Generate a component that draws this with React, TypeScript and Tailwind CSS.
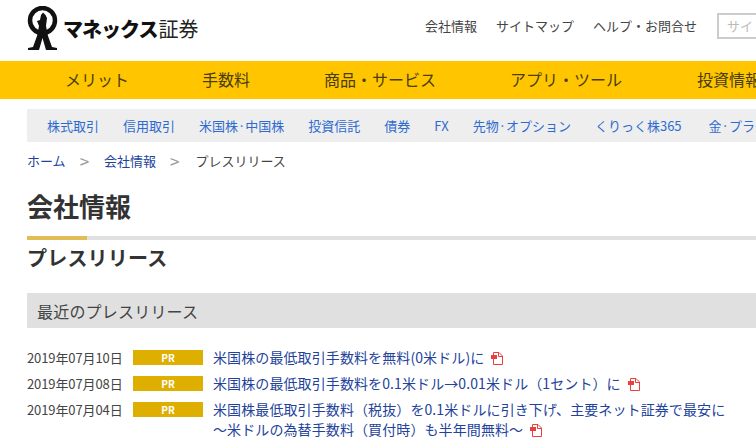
import React from 'react';

const jp = { fontFamily: '"Noto Sans CJK JP", "Noto Sans", sans-serif' };

const mainNav = [
  { label: 'メリット', cls: 'w-[137px]' },
  { label: '手数料', cls: 'w-[122px]' },
  { label: '商品・サービス', cls: 'w-[186px]' },
  { label: 'アプリ・ツール', cls: 'w-[187px]' },
  { label: '投資情報', cls: 'w-[120px]' },
];

const subNav = ['株式取引', '信用取引', '米国株·中国株', '投資信託', '債券', 'FX', '先物·オプション', 'くりっく株365', '金·プラチナ'];

const releases = [
  { date: '2019年07月10日', lines: ['米国株の最低取引手数料を無料(0米ドル)に'] },
  { date: '2019年07月08日', lines: ['米国株の最低取引手数料を0.1米ドル→0.01米ドル（1セント）に'] },
  {
    date: '2019年07月04日',
    lines: ['米国株最低取引手数料（税抜）を0.1米ドルに引き下げ、主要ネット証券で最安に', '～米ドルの為替手数料（買付時）も半年間無料～'],
  },
];

function Logo() {
  return (
    <svg width="31" height="44" viewBox="0 0 31 44" className="shrink-0">
      <circle cx="15.5" cy="14.5" r="12.5" fill="none" stroke="#111" strokeWidth="4.5" />
      <path d="M14 9 L16 6.5 L18.5 9 L20 12 L19 20 L21 30 L25 41 L30 42 L30 44 L19 44 L15.5 32 L12 44 L1 44 L1 42 L6 41 L10 30 L12 20 L10 15 L13 14 Z" fill="#111" />
    </svg>
  );
}

function PdfIcon() {
  return (
    <svg width="12" height="13" viewBox="0 0 12 13" className="inline-block ml-[7px] align-[-2px]">
      <path d="M2.5 0.5 H8 L11.5 4 V12.5 H2.5 Z" fill="#fff" stroke="#e8403f" />
      <path d="M7.5 0.5 V4.5 H11.5" fill="none" stroke="#e8403f" />
      <rect x="0" y="3" width="6" height="4" fill="#e8403f" />
    </svg>
  );
}

export default function App() {
  return (
    <div className="w-[756px] h-[441px] overflow-hidden bg-white text-[#333]" style={jp}>
      {/* Header */}
      <div className="h-[61px] flex items-start pl-[27px] whitespace-nowrap">
        <div className="flex items-start pt-[6px] w-[398px] shrink-0">
          <Logo />
          <span className="ml-[5px] mt-[10px] text-[20px] leading-[26px] font-black tracking-[-1px] text-[#111]">マネックス</span>
          <span className="ml-[1px] mt-[10px] text-[20px] leading-[26px] text-[#222]">証券</span>
        </div>
        <div className="flex items-center h-[26px] mt-[13px] text-[13px] text-[#444] shrink-0">
          <span className="w-[71px]">会社情報</span>
          <span className="w-[97px]">サイトマップ</span>
          <span className="w-[124px]">ヘルプ・お問合せ</span>
          <div className="w-[60px] h-[26px] border-[2px] border-[#ccc] pl-[8px] text-[13px] leading-[22px] text-[#bbb] shrink-0">サイト内検索</div>
        </div>
      </div>

      {/* Main nav */}
      <div className="h-[38px] bg-[#ffc600] flex items-center pb-[3px] pl-[65px] whitespace-nowrap text-[16px] leading-[32px] text-[#4a3d10]">
        {mainNav.map(item => (
          <span key={item.label} className={`${item.cls} shrink-0`}>{item.label}</span>
        ))}
      </div>

      {/* Sub nav */}
      <div className="ml-[27px] mt-[10px] h-[33px] bg-[#eeeeee] flex items-center gap-[24px] pl-[20px] whitespace-nowrap text-[13px] text-[#2e6bd0]">
        {subNav.map(item => (
          <span key={item} className="shrink-0 last:ml-[3px]">{item}</span>
        ))}
      </div>

      {/* Breadcrumb */}
      <div className="ml-[27px] mt-[9px] h-[20px] flex items-center text-[13px] leading-[20px] whitespace-nowrap">
        <span className="text-[#23439b]">ホーム</span>
        <span className="text-[#999] text-[17px] ml-[14px] mr-[15px]">&gt;</span>
        <span className="text-[#23439b]">会社情報</span>
        <span className="text-[#999] text-[17px] ml-[14px] mr-[16px]">&gt;</span>
        <span className="text-[#444]">プレスリリース</span>
      </div>

      <h1 className="ml-[27px] mt-[17px] h-[36px] text-[26px] leading-[36px] font-bold text-[#333]">会社情報</h1>

      {/* Rule */}
      <div className="ml-[27px] mt-[12px] h-[4px] bg-[#e0e0e0]">
        <div className="w-[60px] h-full bg-[#e0bd55]" />
      </div>

      <h2 className="ml-[27px] mt-[4px] h-[28px] text-[20px] leading-[28px] tracking-[0.2px] font-bold text-[#333]">プレスリリース</h2>

      {/* Recent releases */}
      <div className="ml-[27px] mt-[21px] h-[35px] bg-[#e0e0e0] pl-[10px] flex items-center text-[16px] tracking-[0.2px] text-[#444]">
        最近のプレスリリース
      </div>

      <div className="ml-[27px] mt-[20px] flex flex-col gap-[6px] whitespace-nowrap">
        {releases.map(row => (
          <div key={row.date} className="flex items-start">
            <span className="w-[106px] shrink-0 text-[13px] leading-[20px] tracking-[-0.1px] text-[#444]">{row.date}</span>
            <span className="w-[70px] h-[15px] mt-[2px] shrink-0 bg-[#deae00] text-white text-[10px] leading-[15px] font-bold text-center">PR</span>
            <div className="ml-[10px] -mt-px text-[14px] leading-[20px] tracking-[0.1px] text-[#23439b]">
              {row.lines.map((line, i) => (
                <div key={line}>
                  {line}
                  {i === row.lines.length - 1 && <PdfIcon />}
                </div>
              ))}
            </div>
          </div>
        ))}
      </div>
    </div>
  );
}
